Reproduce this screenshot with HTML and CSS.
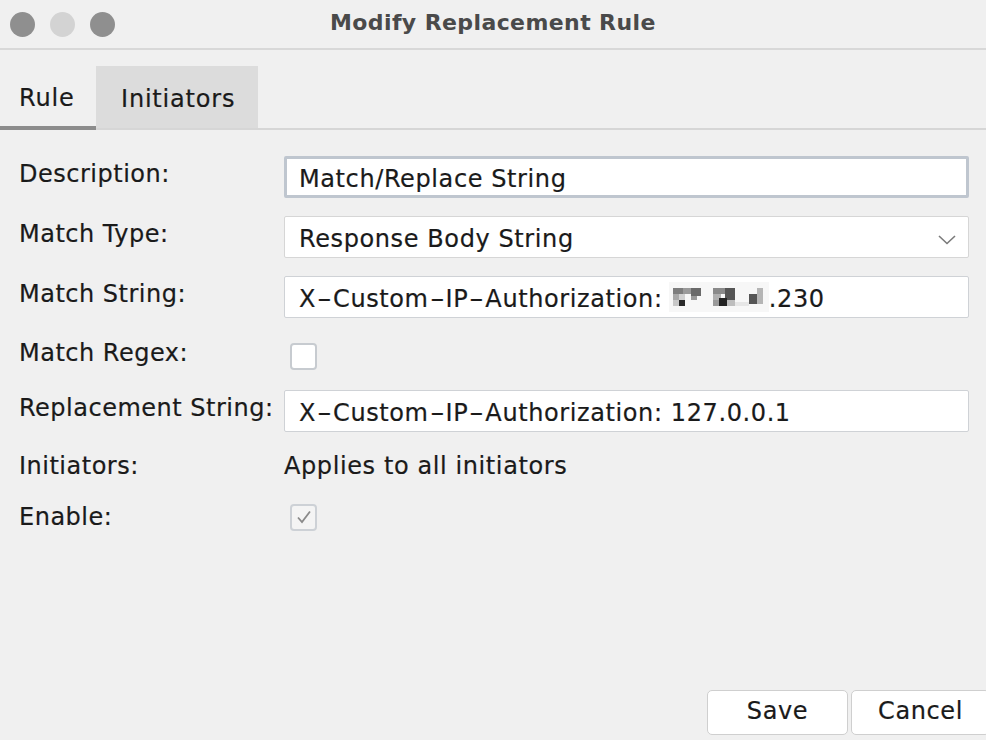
FILE: index.html
```html
<!DOCTYPE html>
<html>
<head>
<meta charset="utf-8">
<link rel="stylesheet" href="styles.css">
</head>
<body>
<div class="window">
  <div class="titlebar">
    <div class="lights">
      <span class="light dark"></span>
      <span class="light pale"></span>
      <span class="light dark"></span>
    </div>
    <div class="title">Modify Replacement Rule</div>
  </div>
  <div class="tabs">
    <div class="tab active">Rule</div>
    <div class="tab other">Initiators</div>
  </div>
  <div class="form">
    <div class="row">
      <div class="label">Description:</div>
      <div class="field focused">Match/Replace String</div>
    </div>
    <div class="row">
      <div class="label">Match Type:</div>
      <div class="field select"><span>Response Body String</span><svg class="chev" width="18" height="10" viewBox="0 0 18 10"><path d="M1 1 L9 8.5 L17 1" fill="none" stroke="#7a7a7a" stroke-width="1.6"/></svg></div>
    </div>
    <div class="row">
      <div class="label">Match String:</div>
      <div class="field"><span>X<span class="hy">-</span>Custom<span class="hy">-</span>IP<span class="hy">-</span>Authorization:&nbsp;</span><svg class="redact" width="100" height="30" viewBox="0 0 100 30">
          <rect x="0" y="0" width="100" height="30" fill="#f7f7f7"/>
          <rect x="4" y="6" width="10" height="6" fill="#7d7d7d"/>
          <rect x="14" y="6" width="8" height="6" fill="#9a9a9a"/>
          <rect x="22" y="6" width="10" height="8" fill="#6a6a6a"/>
          <rect x="4" y="12" width="6" height="6" fill="#a8a8a8"/>
          <rect x="10" y="12" width="6" height="6" fill="#d0d0d0"/>
          <rect x="10" y="18" width="6" height="6" fill="#2a2a2a"/>
          <rect x="4" y="18" width="6" height="6" fill="#c8c8c8"/>
          <rect x="22" y="14" width="6" height="4" fill="#9a9a9a"/>
          <rect x="44" y="6" width="12" height="6" fill="#8a8a8a"/>
          <rect x="56" y="6" width="10" height="12" fill="#555"/>
          <rect x="44" y="12" width="8" height="6" fill="#b0b0b0"/>
          <rect x="50" y="16" width="8" height="8" fill="#222"/>
          <rect x="44" y="18" width="6" height="6" fill="#9a9a9a"/>
          <rect x="58" y="18" width="8" height="6" fill="#bdbdbd"/>
          <rect x="80" y="12" width="8" height="10" fill="#555"/>
          <rect x="88" y="6" width="6" height="16" fill="#b5b5b5"/>
          <rect x="66" y="20" width="14" height="4" fill="#e6e6e6"/>
        </svg><span>.230</span></div>
    </div>
    <div class="row check-row">
      <div class="label">Match Regex:</div>
      <div class="cbwrap"><span class="checkbox"></span></div>
    </div>
    <div class="row">
      <div class="label">Replacement String:</div>
      <div class="field"><span>X<span class="hy">-</span>Custom<span class="hy">-</span>IP<span class="hy">-</span>Authorization: 127.0.0.1</span></div>
    </div>
    <div class="row plain-row">
      <div class="label">Initiators:</div>
      <div class="value">Applies to all initiators</div>
    </div>
    <div class="row plain-row enable-row">
      <div class="label">Enable:</div>
      <div class="cbwrap"><span class="checkbox checked"><svg width="18" height="16" viewBox="0 0 18 16"><path d="M3 8.5 L7 13 L15 2.5" fill="none" stroke="#8a8a8a" stroke-width="1.8"/></svg></span></div>
    </div>
  </div>
  <div class="buttons">
    <div class="btn save">Save</div>
    <div class="btn cancel">Cancel</div>
  </div>
</div>
</body>
</html>
```

FILE: styles.css
```css
html, body {
  margin: 0;
  padding: 0;
  background: #f0f0f0;
}
body {
  width: 986px;
  height: 740px;
  overflow: hidden;
  font-family: "DejaVu Sans", "Liberation Sans", sans-serif;
  color: #1a1a1a;
}
.window {
  display: flex;
  flex-direction: column;
  height: 740px;
}
.titlebar {
  height: 50px;
  border-bottom: 2px solid #d8d8d8;
  display: flex;
  align-items: center;
  box-sizing: border-box;
}
.lights {
  display: flex;
  gap: 15px;
  padding-left: 10px;
  width: 291px;
}
.light {
  width: 25px;
  height: 25px;
  border-radius: 50%;
  display: block;
}
.light.dark { background: #8f8f8f; }
.light.pale { background: #d3d3d3; }
.title {
  font-weight: bold;
  font-size: 22px;
  color: #4a4a4a;
  letter-spacing: 0.4px;
  margin-left: 29px;
  padding-bottom: 4px;
}
.tabs {
  display: flex;
  margin-top: 16px;
  height: 64px;
  border-bottom: 2px solid #d6d6d6;
  box-sizing: border-box;
}
.tab {
  font-size: 24px;
  letter-spacing: 0.8px;
  padding: 0 19px;
  display: flex;
  align-items: center;
  padding-top: 3px;
  box-sizing: border-box;
  -webkit-text-stroke: 0.2px #1a1a1a;
}
.tab.active {
  width: 96px;
  border-bottom: 4px solid #8c8c8c;
  margin-bottom: -2px;
}
.tab.other {
  background: #dcdcdc;
  width: 162px;
  padding-left: 25px;
}
.form {
  padding: 26px 17px 0 19px;
  display: flex;
  flex-direction: column;
  gap: 18px;
}
.row {
  display: flex;
  align-items: center;
  height: 42px;
}
.label, .field, .value {
  font-size: 24px;
  -webkit-text-stroke: 0.2px #1a1a1a;
}
.label {
  width: 265px;
  flex: none;
  letter-spacing: 0.5px;
  padding-bottom: 6px;
}
.field, .value {
  letter-spacing: 0.6px;
}
.hy {
  display: inline-block;
  width: 17px;
  text-align: center;
  transform: scaleX(1.7);
  letter-spacing: 0;
}
.field {
  flex: 1;
  height: 42px;
  box-sizing: border-box;
  background: #ffffff;
  border: 1px solid #cfd2d6;
  border-radius: 2px;
  padding: 3px 14px 0 14px;
  display: flex;
  align-items: center;
  position: relative;
}
.field > span { white-space: pre; }
.field.focused {
  border: 3px solid #bfc6cf;
  padding-left: 12px;
}
.field.select {
  border-color: #d6d6d6;
}
.chev {
  position: absolute;
  right: 12px;
  top: 18px;
}
.redact {
  display: block;
  margin-left: -2px;
  margin-top: -4px;
}
.check-row { height: 36px; margin-top: 2px; margin-bottom: -2px; }
.cbwrap {
  flex: 1;
  display: flex;
  align-items: center;
  padding-left: 6px;
}
.checkbox {
  width: 27px;
  height: 27px;
  box-sizing: border-box;
  border: 2px solid #c7cbd0;
  border-radius: 4px;
  background: #ffffff;
  display: flex;
  align-items: center;
  justify-content: center;
}
.checkbox.checked {
  background: #f4f4f4;
  border-color: #cdd1d6;
}
.plain-row {
  height: 30px;
  margin-top: 4px;
}
.plain-row .label { padding-bottom: 6px; }
.value { padding-bottom: 6px; }
.enable-row { margin-top: 3px; }
.enable-row .cbwrap { padding-bottom: 6px; }
.buttons {
  margin-top: auto;
  display: flex;
  justify-content: flex-end;
  gap: 3px;
  padding-bottom: 5px;
  margin-right: -4px;
}
.btn {
  height: 45px;
  box-sizing: border-box;
  background: #ffffff;
  border: 1px solid #cfcfcf;
  border-radius: 5px;
  font-size: 24px;
  letter-spacing: 0.6px;
  -webkit-text-stroke: 0.2px #1a1a1a;
  display: flex;
  align-items: center;
  justify-content: center;
  padding-bottom: 3px;
}
.btn.save { width: 141px; }
.btn.cancel { width: 139px; }
```
